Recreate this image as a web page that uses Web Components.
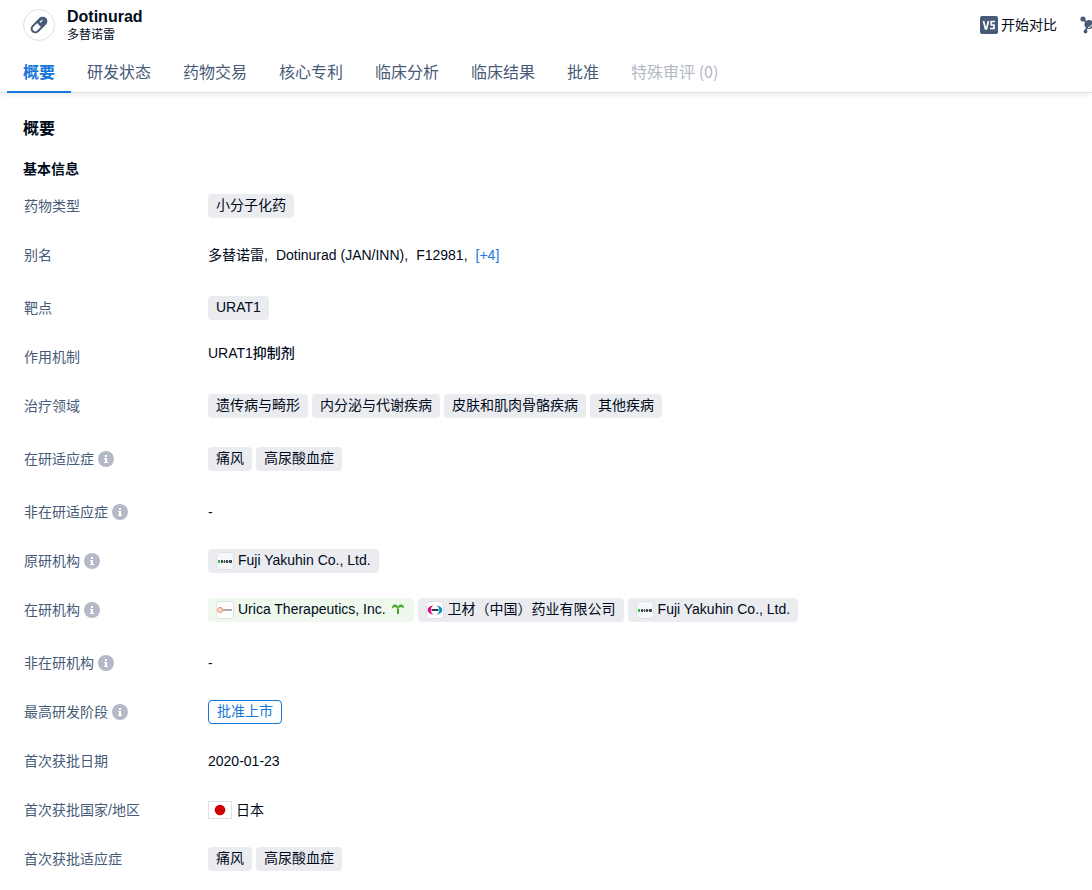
<!DOCTYPE html>
<html lang="zh-CN">
<head>
<meta charset="utf-8">
<title>Dotinurad</title>
<style>
  body { margin: 0; background: #fff; color: #000a1a; font: 14px/24px "Liberation Sans", "Noto Sans CJK SC", sans-serif; overflow-x: hidden; }
</style>
</head>
<body>
<drug-page></drug-page>
<script>
function define(name, html, setup) {
  const template = document.createElement('template');
  template.innerHTML = html;
  customElements.define(name, class extends HTMLElement {
    connectedCallback() {
      if (this.shadowRoot) return;
      this.attachShadow({ mode: 'open' }).append(template.content.cloneNode(true));
      if (setup) setup(this, this.shadowRoot);
    }
  });
}

/* Small info mark after a field label */
define('info-mark', `
<style>
  :host { display: block; flex: none; width: 16px; height: 16px; }
  svg { display: block; }
</style>
<svg width="16" height="16" viewBox="0 0 16 16" role="img" aria-label="说明"><circle cx="8" cy="8" r="8" fill="#b3b9c7"/><path d="M7 4h2v2H7zM6 7h3v4h1v1H6v-1h1V8H6z" fill="#fff"/></svg>`);

/* Company logos */
const logos = {
  fuji: '<path d="M1 7h2v3H1z" fill="#2fb344"/><path d="M4 7h2v3H4zM7 7h1v3H7zM9 7h2v3H9zM12 7h3v3h-3z" fill="#4a4f58"/><path d="M6 8h1v1H6zM8 8h1v1H8zM11 8h1v1h-1z" fill="#8d929a"/>',
  urica: '<circle cx="3" cy="8" r="2.300" fill="#fdeee4" stroke="#f0976f" stroke-width="1.200"/><path d="M5.500 8H15" stroke="#b5aaa8" stroke-width="2"/>',
  eisai: '<path d="M6.500 3.500C3 3.800 .7 5.700 .7 8s2.300 4.200 5.800 4.500C4.700 11.300 3.700 9.800 3.700 8s1-3.300 2.800-4.500z" fill="#e5007f"/><path d="M9.500 3.500c3.500 .3 5.800 2.200 5.800 4.500s-2.300 4.200-5.800 4.500c1.800-1.200 2.800-2.700 2.800-4.500s-1-3.300-2.800-4.500z" fill="#0096c0"/><path d="M4.500 8h7" stroke="#333c55" stroke-width="2"/>'
};
define('org-logo', `
<style>
  :host { display: block; flex: none; box-sizing: border-box; width: 18px; height: 18px; border: 1px solid #dfe1e8; border-radius: 4px; background: #fff; }
  :host([name="fuji"]) { background: #f6f7f9; }
  svg { display: block; }
</style>
<svg width="16" height="16" viewBox="0 0 16 16" aria-hidden="true"></svg>`, (host, root) => {
  root.querySelector('svg').innerHTML = logos[host.getAttribute('name')];
});

define('info-tag', `
<style>
  :host { display: inline-flex; align-items: center; gap: 4px; box-sizing: border-box; height: 24px; padding: 0 8px; border-radius: 4px; background: #ebecf0; line-height: 22px; white-space: nowrap; }
  :host([tone="green"]) { background: #eef8ec; }
  :host([tone="outline"]) { background: #fff; border: 1px solid #1677d9; color: #1677d9; }
  .text { padding-bottom: 2px; }
</style>
<slot name="icon"></slot><span class="text"><slot></slot></span><slot name="after"></slot>`);

define('info-row', `
<style>
  :host { display: grid; grid-template-columns: 184px minmax(0, 1fr); align-items: start; padding-bottom: 25px; }
  :host([roomy]) { padding-bottom: 29px; }
  dt { display: flex; align-items: center; gap: 4px; color: #475a78; }
  dd { display: flex; flex-wrap: wrap; align-items: center; gap: 4px; margin: 0; min-height: 24px; }
  :host([raised]) dd { line-height: 16px; min-height: 16px; }
</style>
<dt><span id="label"></span></dt><dd><slot></slot></dd>`, (host, root) => {
  root.getElementById('label').textContent = host.getAttribute('label');
  if (host.hasAttribute('info')) root.querySelector('dt').append(document.createElement('info-mark'));
});

define('drug-header', `
<style>
  :host { display: flex; align-items: center; justify-content: space-between; height: 50px; padding-left: 23px; overflow: hidden; }
  .drug { display: flex; align-items: center; gap: 12px; }
  .pill { display: flex; align-items: center; justify-content: center; box-sizing: border-box; width: 32px; height: 32px; border: 1px solid #dfe1e8; border-radius: 50%; }
  h1 { margin: 0; font-size: 16px; line-height: 20px; font-weight: 700; }
  p { margin: 0; font-size: 12px; line-height: 16px; }
  .actions { display: flex; align-items: center; gap: 23px; margin-right: -6px; }
  button { display: flex; align-items: center; gap: 3px; padding: 0; border: 0; background: none; color: inherit; font: inherit; }
  svg { display: block; flex: none; }
</style>
<div class="drug">
  <span class="pill"><svg width="20" height="20" viewBox="0 0 18 18" aria-hidden="true"><g transform="rotate(45 9 9)"><rect x="5.700" y="1" width="6.600" height="16" rx="3.300" fill="#fff" stroke="#475a78" stroke-width="1.800"/><path d="M5.200 9V4.200a3.800 3.800 0 0 1 7.600 0V9z" fill="#475a78"/><path d="M8 4v2.500" stroke="#fff" stroke-width="1" stroke-linecap="round"/></g></svg></span>
  <div><h1>Dotinurad</h1><p>多替诺雷</p></div>
</div>
<div class="actions">
  <button type="button"><svg width="18" height="18" viewBox="0 0 18 18" aria-hidden="true"><rect width="18" height="18" rx="2" fill="#475a78"/><path d="M3.500 5l2 8h1l2-8M15 5.500h-3.700V9H14v3.500h-4" fill="none" stroke="#fff" stroke-width="1.700"/></svg>开始对比</button>
  <button type="button" aria-label="结构"><svg width="18" height="18" viewBox="0 0 18 18" aria-hidden="true"><g fill="#475a78"><path d="M3 3l6 6 6-5M9 9l-4 6" stroke="#475a78" stroke-width="1.600" fill="none"/><circle cx="3" cy="3" r="2.600"/><circle cx="9" cy="8.500" r="4.600"/><circle cx="5.500" cy="15.500" r="1.900"/><circle cx="15" cy="3.500" r="2"/></g><path d="M8 11.500q3 0 4-3" stroke="#fff" fill="none"/></svg></button>
</div>`);

define('drug-tabs', `
<style>
  :host { display: block; border-bottom: 1px solid #dfe1e6; box-shadow: 0 4px 4px -1px rgba(0, 10, 26, .06); }
  nav { display: flex; padding-left: 7px; }
  a { box-sizing: border-box; height: 43px; margin-bottom: -1px; padding: 9px 16px 0; border-bottom: 2px solid transparent; color: #475a78; font: 16px/24px "Noto Sans CJK SC", sans-serif; text-decoration: none; white-space: nowrap; }
  a[aria-current] { border-color: #1677d9; color: #1677d9; font-weight: 700; }
  a[aria-disabled] { color: #b3b9c7; }
</style>
<nav>
  <a href="#overview" aria-current="page">概要</a><a href="#status">研发状态</a><a href="#deals">药物交易</a><a href="#patents">核心专利</a><a href="#analysis">临床分析</a><a href="#results">临床结果</a><a href="#approval">批准</a><a href="#special" aria-disabled="true">特殊审评 (0)</a>
</nav>`);

define('drug-page', `
<style>
  :host { display: block; }
  main { padding: 24px 23px 0; }
  h2 { margin: 0 0 16px; font-size: 16px; line-height: 24px; }
  h3 { margin: 0 0 13px; font-size: 14px; line-height: 24px; }
  dl { margin: 0; padding-left: 1px; }
  a { color: #1677d9; text-decoration: none; }
  .names { display: flex; flex-wrap: wrap; }
  .names a { margin-left: 8px; }
  .names span + span { margin-left: 8px; }
  .mechanism { font-weight: 500; }
  .flag { box-sizing: border-box; width: 24px; height: 18px; border: 1px solid #dfe1e8; }
  svg { display: block; }
</style>
<drug-header></drug-header>
<drug-tabs></drug-tabs>
<main id="overview">
  <h2>概要</h2>
  <h3>基本信息</h3>
  <dl>
    <info-row label="药物类型"><info-tag>小分子化药</info-tag></info-row>
    <info-row label="别名" roomy><span class="names"><span>多替诺雷,</span><span>Dotinurad (JAN/INN),</span><span>F12981,</span><a href="#names">[+4]</a></span></info-row>
    <info-row label="靶点"><info-tag>URAT1</info-tag></info-row>
    <info-row label="作用机制" raised><span class="mechanism">URAT1抑制剂</span></info-row>
    <info-row label="治疗领域" roomy><info-tag>遗传病与畸形</info-tag><info-tag>内分泌与代谢疾病</info-tag><info-tag>皮肤和肌肉骨骼疾病</info-tag><info-tag>其他疾病</info-tag></info-row>
    <info-row label="在研适应症" info roomy><info-tag>痛风</info-tag><info-tag>高尿酸血症</info-tag></info-row>
    <info-row label="非在研适应症" info>-</info-row>
    <info-row label="原研机构" info><info-tag><org-logo slot="icon" name="fuji"></org-logo>Fuji Yakuhin Co., Ltd.</info-tag></info-row>
    <info-row label="在研机构" info roomy><info-tag tone="green"><org-logo slot="icon" name="urica"></org-logo>Urica Therapeutics, Inc.<svg slot="after" width="16" height="16" viewBox="0 0 16 16" aria-hidden="true"><path d="M8 12V6.500" stroke="#43a829" stroke-width="2" fill="none"/><path d="M2 6.500Q2 2.500 5 2.500q3 .2 3.500 4.500Q6 5 5 5 3.500 5 2 6.500zM14 6.500Q14 2.500 11 2.500q-3 .2-3.500 4.500Q10 5 11 5q1.500 0 3 1.500z" fill="#43a829"/></svg></info-tag><info-tag><org-logo slot="icon" name="eisai"></org-logo>卫材（中国）药业有限公司</info-tag><info-tag><org-logo slot="icon" name="fuji"></org-logo>Fuji Yakuhin Co., Ltd.</info-tag></info-row>
    <info-row label="非在研机构" info>-</info-row>
    <info-row label="最高研发阶段" info><info-tag tone="outline">批准上市</info-tag></info-row>
    <info-row label="首次获批日期">2020-01-23</info-row>
    <info-row label="首次获批国家/地区"><span class="flag"><svg width="22" height="16" viewBox="0 0 22 16" role="img" aria-label="日本国旗"><circle cx="11" cy="8" r="5.300" fill="#d30000"/></svg></span>日本</info-row>
    <info-row label="首次获批适应症"><info-tag>痛风</info-tag><info-tag>高尿酸血症</info-tag></info-row>
  </dl>
</main>`);
</script>
</body>
</html>
